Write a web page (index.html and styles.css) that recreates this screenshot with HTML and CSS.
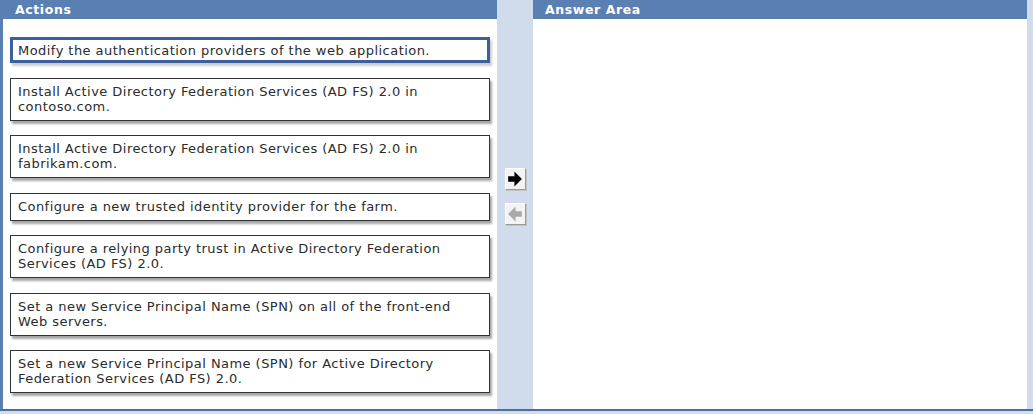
FILE: index.html
```html
<!DOCTYPE html>
<html lang="en">
<head>
    <meta charset="UTF-8">
    <title>Build List</title>
    <link rel="stylesheet" href="styles.css">
</head>
<body>
    <div class="exercise">
        <div class="pane actions">
            <div class="pane-header">Actions</div>
            <div class="item-list">
                <div class="item selected">Modify the authentication providers of the web application.</div>
                <div class="item">Install Active Directory Federation Services (AD FS) 2.0 in contoso.com.</div>
                <div class="item">Install Active Directory Federation Services (AD FS) 2.0 in fabrikam.com.</div>
                <div class="item">Configure a new trusted identity provider for the farm.</div>
                <div class="item">Configure a relying party trust in Active Directory Federation Services (AD FS) 2.0.</div>
                <div class="item">Set a new Service Principal Name (SPN) on all of the front-end Web servers.</div>
                <div class="item">Set a new Service Principal Name (SPN) for Active Directory Federation Services (AD FS) 2.0.</div>
            </div>
        </div>

        <div class="controls">
            <button class="move-btn" title="Move right">
                <svg width="16" height="16" viewBox="0 0 14 14">
                    <polygon points="1,4.5 6.5,4.5 6.5,0.5 13,7 6.5,13.5 6.5,9.5 1,9.5" fill="#000"/>
                </svg>
            </button>
            <button class="move-btn disabled" title="Move left">
                <svg width="16" height="16" viewBox="0 0 14 14">
                    <polygon points="13,4.5 7.5,4.5 7.5,0.5 1,7 7.5,13.5 7.5,9.5 13,9.5" fill="#a9a9a9"/>
                </svg>
            </button>
        </div>

        <div class="pane answer">
            <div class="pane-header">Answer Area</div>
            <div class="answer-body"></div>
        </div>
    </div>
</body>
</html>
```

FILE: styles.css
```css
body {
    margin: 0;
    width: 1033px;
    height: 414px;
    overflow: hidden;
    background-color: #d2deed;
    font-family: "DejaVu Sans", Verdana, sans-serif;
}

.exercise {
    display: flex;
    height: 411px;
    border-bottom: 2px solid #4d6f9f;
    box-sizing: border-box;
    background-color: #d0dcec;
}

.pane {
    display: flex;
    flex-direction: column;
    background: #fff;
}

.pane-header {
    height: 19px;
    line-height: 19px;
    background-color: #5a7fb2;
    color: #fff;
    font-size: 12.5px;
    font-weight: bold;
    letter-spacing: 0.6px;
    padding-left: 12px;
    flex: none;
}

.actions {
    width: 497px;
    border-left: 3px solid #5a7fb2;
    box-sizing: border-box;
}

.item-list {
    display: flex;
    flex-direction: column;
    gap: 14.5px;
    padding: 18px 0 0 7px;
}

.item {
    width: 480px;
    box-sizing: border-box;
    border: 1px solid #333;
    padding: 5px 7px 6px 7px;
    font-size: 13px;
    letter-spacing: 0.45px;
    line-height: 15px;
    color: #2b2b2b;
    background: #fff;
    box-shadow: 2px 3px 2px rgba(0, 0, 0, 0.35);
}

.item.selected {
    border: 3px solid #3d609c;
    padding: 3px 5px 2px 5px;
    box-shadow: 2px 3px 2px rgba(0, 0, 0, 0.2);
}

.controls {
    width: 36px;
    display: flex;
    flex-direction: column;
    align-items: center;
    gap: 13px;
    padding-top: 168px;
    box-sizing: border-box;
}

.move-btn {
    width: 21px;
    height: 22px;
    padding: 0;
    display: flex;
    align-items: center;
    justify-content: center;
    background: #f3f3f3;
    border: 1px solid;
    border-color: #fff #9a9a9a #9a9a9a #fff;
    box-shadow: 1px 1px 0 #c4c4c4;
    cursor: pointer;
}

.move-btn.disabled {
    cursor: default;
}

.answer {
    width: 494px;
}

.answer-body {
    flex: 1;
}
```
